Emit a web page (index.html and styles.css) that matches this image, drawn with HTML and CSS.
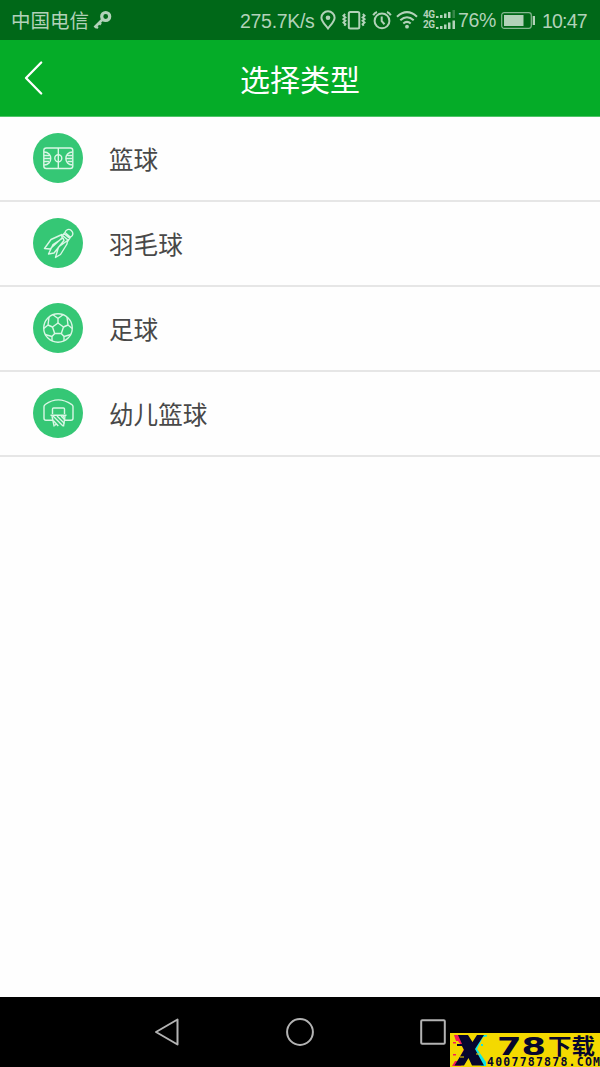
FILE: index.html
```html
<!DOCTYPE html>
<html lang="zh-CN">
<head>
	<meta charset="UTF-8">
	<meta name="viewport" content="width=device-width">
	<title>选择类型</title>
	<link rel="stylesheet" href="styles.css">
</head>
<body>

<div class="status-bar">
	<span class="carrier">中国电信</span>
	<svg class="key" width="20" height="22" viewBox="0 0 20 22" fill="none" stroke="currentColor">
		<circle cx="12.7" cy="7.5" r="4" stroke-width="3.2"/>
		<path d="M9.500 10.500L1.500 18.500M2.500 17.500l2.500 1.500M6 14l2 1.600" stroke-width="2.600"/>
	</svg>
	<span class="speed">275.7K/s</span>
	<svg class="pin" width="16" height="20" viewBox="0 0 16 20" fill="none" stroke="currentColor" stroke-width="2">
		<path d="M8 18.500C5 14.500 1.400 11.300 1.400 7.700a6.600 6.400 0 0 1 13.200 0C14.600 11.300 11 14.500 8 18.500z"/>
		<circle cx="8" cy="7.700" r="2.300" fill="currentColor" stroke="none"/>
	</svg>
	<svg class="vibrate" width="24" height="20" viewBox="0 0 24 20" fill="none" stroke="currentColor" stroke-width="2">
		<rect x="6.800" y="2" width="10.500" height="16.500" rx="1.500"/>
		<path d="M3.200 4L1.400 5.700l2 1.700-2 1.700 2 1.700-2 1.700 2 1.700-1 1.500M20.800 4l1.800 1.700-2 1.700 2 1.700-2 1.700 2 1.700-2 1.700 1 1.500"/>
	</svg>
	<svg class="alarm" width="20" height="20" viewBox="0 0 20 20" fill="none" stroke="currentColor" stroke-width="2">
		<circle cx="10" cy="10.900" r="7.400"/>
		<path d="M9.700 6.500v4.700l2.800 3M1.200 5.300Q2.500 2.800 5 2M18.800 5.300Q17.500 2.800 15 2"/>
	</svg>
	<svg class="wifi" width="22" height="20" viewBox="0 0 22 20" fill="none" stroke="currentColor" stroke-width="2.100">
		<path d="M1 6.700Q11-2.300 21 6.700M4.300 10.200Q11 4.300 17.700 10.200M7.300 13.500Q11 10.300 14.700 13.500"/>
		<circle cx="11" cy="16.700" r="1.900" fill="currentColor" stroke="none"/>
	</svg>
	<span class="network"><span>4G</span><span>2G</span></span>
	<svg class="signal" width="20" height="20" viewBox="0 0 20 20" fill="currentColor">
		<path d="M0 6h2.500v2H0zM4 5h2.500v3H4zM8 3.500h2.500V8H8zM12 2h2.500v6H12zM0 17h2.500v2H0zM4 16h2.500v3H4zM8 14.500h2.500V19H8zM12 12.500h2.500V19H12zM16.500 10.500H19V19h-2.500z"/>
		<path d="M16.500 0H19v8h-2.500z" opacity=".3"/>
	</svg>
	<span class="percent">76%</span>
	<svg class="battery" width="34" height="17" viewBox="0 0 34 17">
		<rect x=".7" y=".7" width="29.600" height="15.600" rx="2.500" fill="none" stroke="currentColor" stroke-width="1.200" opacity=".75"/>
		<path d="M3 3h19.500v11H3zM31.700 4H34v9h-2.300z" fill="currentColor"/>
	</svg>
	<span class="clock">10:47</span>
</div>

<header class="title-bar">
	<svg class="back" width="20" height="36" viewBox="0 0 20 36" fill="none" stroke="#fff" stroke-width="2.300" stroke-linecap="round" stroke-linejoin="round">
		<path d="M17.200 2.500L2 18l15.200 15.500"/>
	</svg>
	<h1>选择类型</h1>
</header>

<main>
	<ul class="type-list">
		<li>
			<svg class="type-icon" viewBox="0 0 50 50">
				<circle class="disc" cx="25" cy="25" r="25"/>
				<rect x="10.800" y="15" width="29" height="20.500" rx="2.500"/>
				<path d="M25.300 15v20.500M11 19c9 0 9 13 0 13M11 22.500h5M11 25.500h6.500M11 28.500h5M39.600 19c-9 0-9 13 0 13M39.600 22.500h-5M39.600 25.500h-6.500M39.600 28.500h-5"/>
				<circle cx="25.300" cy="25.300" r="3.500"/>
			</svg>
			<span>篮球</span>
		</li>
		<li>
			<svg class="type-icon" viewBox="0 0 50 50">
				<circle class="disc" cx="25" cy="25" r="25"/>
				<path d="M32 14.500c.8-3.200 4-4 6.300-2s2.200 5.200-.8 6.700zM31.200 15.800l5.600 4.600M29.500 17.500l5.700 4.800M32 14.500l-3.500 4M37.500 19.200l-3 4.500"/>
				<path d="M29 16.500L18 21.500 11.500 30.500l5.500.5 12-11zM30 20L20 26.500l-4.500 9.500 5.500-1L31 22.500zM34.500 22.500L25.500 29l-3 10.500 5-3L34 26z"/>
			</svg>
			<span>羽毛球</span>
		</li>
		<li>
			<svg class="type-icon" viewBox="0 0 50 50">
				<circle class="disc" cx="25" cy="25" r="25"/>
				<circle cx="25" cy="25" r="14.300"/>
				<path d="M25 20l5.500 4-2.200 6.500h-6.600L19.500 24z"/>
				<path d="M25 20v-4.500M30.500 24l4.500-2M28.300 30.500l2.700 3M21.700 30.500l-2.700 3M19.500 24L15 22M20 11.700l5 3.800 5-3.800M34 14l1 8 4.200 3.500M38 31.500l-7 2v4.500M12 31.500l7 2v4.500M10.800 25.500L15 22l1-8"/>
			</svg>
			<span>足球</span>
		</li>
		<li>
			<svg class="type-icon" viewBox="0 0 50 50">
				<circle class="disc" cx="25" cy="25" r="25"/>
				<path d="M19.500 32.300h-6.500a2 2 0 0 1-2-2V18.500q0-1.500 1.500-2.200Q25 7.500 38.500 16.300q1.500.7 1.500 2.200v11.800a2 2 0 0 1-2 2h-6.500M19.500 26v-5a1 1 0 0 1 1-1h10a1 1 0 0 1 1 1V26M17.500 27.200h16M19 28l2.200 10.500M32 28l-1.500 10.500"/>
				<path d="M20 28l10 10M24 28l7.500 7.500M28 28l4 4M20.300 32.500l5 5.500M21.500 37.500l2-1.500M30 28l1 1.500"/>
			</svg>
			<span>幼儿篮球</span>
		</li>
	</ul>
</main>

<footer class="nav-bar">
	<svg width="26" height="30" viewBox="0 0 26 30"><path d="M23.500 2.500v25L2 15z"/></svg>
	<svg width="28" height="30" viewBox="0 0 28 30"><circle cx="14" cy="15" r="12.900"/></svg>
	<svg width="26" height="30" viewBox="0 0 26 30"><rect x="1.200" y="3.200" width="23.600" height="23.600" rx="1"/></svg>
</footer>

<div class="watermark">
	<svg width="150" height="34" viewBox="0 0 150 34">
		<path fill="#10e5e5" d="M29 2h6v2h-2l-6 12 9 13v4h-5L20 18zM35 2h2v1.500h-2zM31 11h2v2h-2z"/>
		<path fill="#f51d5b" d="M4 2h7l9 14-9 17H2l3-5h3l6-12-6-8H6zM3 9h3v1.500H3zM3 21h3v1.500H3z"/>
		<path fill="#06062d" d="M8 2h10l4.500 7L27 2h7l-9 14 9 16.500H22L18.500 25 14 32.500H4.500L14 17l-2-4H7v-2h5z"/>
		<path stroke="#f4d900" d="M6 14.500h6M10 24h4M26 21h4"/>
		<text class="mark-name" x="47" y="21.500" textLength="49" lengthAdjust="spacingAndGlyphs">78</text>
		<text class="mark-name mark-cjk" x="98" y="20.500" textLength="47" lengthAdjust="spacingAndGlyphs">下载</text>
		<text class="mark-url" x="37" y="33" textLength="113" lengthAdjust="spacing">4007787878.COM</text>
	</svg>
</div>

</body>
</html>
```

FILE: styles.css
```css
* {
	box-sizing: border-box;
}

body {
	margin: 0;
	height: 1067px;
	display: flex;
	flex-direction: column;
	position: relative;
	overflow: hidden;
	background: #fefefe;
	font-family: "Liberation Sans", "Noto Sans CJK SC", sans-serif;
}

svg {
	display: block;
	flex: none;
}

/* status bar */
.status-bar {
	height: 40px;
	flex: none;
	display: flex;
	align-items: center;
	padding-left: 11px;
	background: #006818;
	color: #b2d2b9;
	font-size: 19.5px;
	line-height: 40px;
	white-space: nowrap;
}

.status-bar > span {
	flex: none;
}

.carrier {
	width: 82px;
	padding-top: 2px;
}

.key {
	margin-right: 127px;
}

.speed {
	width: 80px;
	padding-top: 2px;
	letter-spacing: -0.3px;
}

.pin {
	margin-right: 6px;
}

.vibrate {
	margin-right: 6px;
}

.alarm {
	margin-right: 4px;
}

.wifi {
	margin-right: 5px;
}

.network {
	width: 13px;
	display: flex;
	flex-direction: column;
	font: bold 10px/10px "Roboto", sans-serif;
	letter-spacing: -0.5px;
}

.signal {
	margin-right: 2px;
}

.percent {
	width: 43px;
	letter-spacing: -0.4px;
}

.battery {
	margin-right: 7px;
}

.clock {
	padding-top: 2px;
	letter-spacing: -0.8px;
}

/* title bar */
.title-bar {
	height: 77px;
	flex: none;
	display: grid;
	grid-template-columns: 60px 1fr 60px;
	align-items: center;
	background: #05ac28;
	border-bottom: 1px solid #4fc568;
	color: #fff;
}

.back {
	margin-left: 24px;
}

.title-bar h1 {
	margin: 0;
	padding-top: 5px;
	text-align: center;
	font-size: 30px;
	font-weight: normal;
	line-height: 71px;
}

/* list of sports */
main {
	flex: 1;
}

.type-list {
	margin: 0;
	padding: 0;
	list-style: none;
}

.type-list li {
	height: 85px;
	display: flex;
	align-items: center;
	gap: 26px;
	padding: 0 0 1px 33px;
	border-bottom: 2px solid #e6e6e6;
	color: #484848;
	font-size: 24.6px;
}

.type-icon {
	width: 50px;
	height: 50px;
	fill: none;
	stroke: #d9f7e5;
	stroke-width: 1.4;
	stroke-linejoin: round;
}

.type-icon .disc {
	fill: #35c775;
	stroke: none;
}

/* android buttons */
.nav-bar {
	height: 70px;
	flex: none;
	display: flex;
	justify-content: space-between;
	align-items: center;
	padding: 0 154px;
	background: #000;
}

.nav-bar svg {
	fill: none;
	stroke: #b3b3b3;
	stroke-width: 2;
	stroke-linejoin: round;
}

.watermark {
	position: absolute;
	right: 0;
	bottom: 0;
	width: 150px;
	height: 34px;
	background: #f4d900;
}

.watermark svg {
	overflow: visible;
}

.watermark text {
	fill: #06062d;
}

.mark-name {
	font: bold 25px "DejaVu Sans", sans-serif;
}

.mark-cjk {
	font: bold 21.5px "Noto Sans CJK SC", sans-serif;
}

.mark-url {
	font: bold 11.5px "DejaVu Sans Mono", monospace;
}
```
